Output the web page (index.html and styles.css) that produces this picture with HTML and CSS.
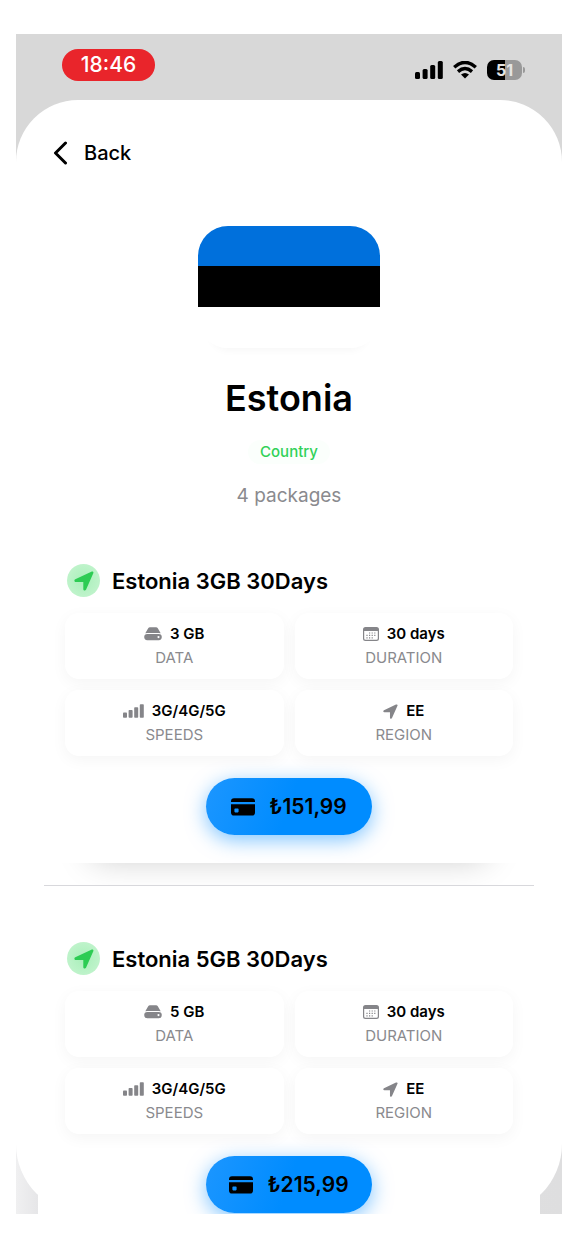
FILE: index.html
```html
<!DOCTYPE html>
<html lang="en">
<head>
<meta charset="utf-8">
<meta name="viewport" content="width=device-width, initial-scale=1">
<title>Estonia packages</title>
<link rel="stylesheet" href="styles.css">
</head>
<body>
<svg class="sprite" aria-hidden="true">
  <symbol id="arrow" viewBox="0 0 20 20"><path d="M19.3 2.3 12 18.7C11.4 20 9.3 19.7 9.3 18.2V11L1.8 10.9C.1 10.8-.1 9 1.3 8.3L17.3.7C18.7.1 19.9 1.1 19.3 2.3Z"/></symbol>
  <symbol id="drive" viewBox="0 0 18 14"><path d="M4.2 1.2Q4.8 .2 6 .2H12Q13.2 .2 13.8 1.2L16.7 6.3Q15.6 5.9 14.6 5.9H3.4Q2.4 5.9 1.3 6.3Z"/><path fill-rule="evenodd" d="M3.3 7H14.7A3.1 3.1 0 0 1 14.7 13.2H3.3A3.1 3.1 0 0 1 3.3 7ZM14.5 9A1.1 1.1 0 1 0 14.5 11.2 1.1 1.1 0 0 0 14.5 9Z"/></symbol>
  <symbol id="calendar" viewBox="0 0 16 14"><path fill-rule="evenodd" d="M2.5 0H13.5Q16 0 16 2.5V11.5Q16 14 13.5 14H2.5Q0 14 0 11.5V2.5Q0 0 2.5 0ZM1.2 4V11.6Q1.2 12.8 2.4 12.8H13.6Q14.8 12.8 14.8 11.6V4Z"/><path d="M6 5.4h1.2v1.2H6zM8.6 5.4h1.2v1.2H8.6zM11.2 5.4h1.2v1.2h-1.2zM3.4 7.8h1.2V9H3.4zM6 7.8h1.2V9H6zM8.6 7.8h1.2V9H8.6zM11.2 7.8h1.2V9h-1.2zM3.4 10.2h1.2v1.2H3.4zM6 10.2h1.2v1.2H6zM8.6 10.2h1.2v1.2H8.6z"/></symbol>
  <symbol id="bars" viewBox="0 0 21 14"><rect x="0" y="8.5" width="4" height="5.2" rx=".8"/><rect x="5.6" y="6" width="4" height="7.7" rx=".8"/><rect x="11.2" y="3.2" width="4" height="10.5" rx=".8"/><rect x="16.8" y=".3" width="4" height="13.4" rx=".8"/></symbol>
  <symbol id="card" viewBox="0 0 24 18"><path d="M0 4V3.2Q0 .3 3 .3H21Q24 .3 24 3.2V4Z"/><path fill-rule="evenodd" d="M0 6.2H24V14.5Q24 17.6 21 17.6H3Q0 17.6 0 14.5ZM4.2 10.4Q3.4 10.4 3.4 11.2V13.6Q3.4 14.4 4.2 14.4H6.8Q7.6 14.4 7.6 13.6V11.2Q7.6 10.4 6.8 10.4Z"/></symbol>
</svg>
<div class="screen">
  <header class="status">
    <span class="time">18:46</span>
    <div class="indicators">
      <svg class="signal" viewBox="0 0 28 18"><rect x="0" y="11" width="5" height="7" rx="1.5"/><rect x="7.6" y="8" width="5" height="10" rx="1.5"/><rect x="15.2" y="4" width="5" height="14" rx="1.5"/><rect x="22.8" y="0" width="5" height="18" rx="1.5"/></svg>
      <svg class="wifi" viewBox="0 0 24 18"><path d="M1.2 6.2Q12-3.4 22.8 6.2M5 10.6Q12 4.6 19 10.6" fill="none" stroke="currentColor" stroke-width="3.4"/><path d="M8 13.6Q12 10.2 16 13.6L12 17.6Z"/></svg>
      <span class="battery"><span class="level">51</span></span>
    </div>
  </header>
  <main class="sheet">
    <button class="back" type="button"><svg class="chevron" viewBox="0 0 14 24"><path d="M12 2 2 12 12 22"/></svg>Back</button>
    <section class="hero">
      <div class="flag" role="img" aria-label="Flag of Estonia"></div>
      <h1 class="country">Estonia</h1>
      <p class="kind">Country</p>
      <p class="count">4 packages</p>
    </section>
    <div class="packages">
      <article class="package">
        <div class="panel">
          <h2 class="name"><span class="badge"><svg class="badge-icon"><use href="#arrow"/></svg></span>Estonia 3GB 30Days</h2>
          <div class="facts">
            <div class="fact"><div class="value"><svg class="drive"><use href="#drive"/></svg>3 GB</div><div class="label">DATA</div></div>
            <div class="fact"><div class="value"><svg class="calendar"><use href="#calendar"/></svg>30 days</div><div class="label">DURATION</div></div>
            <div class="fact"><div class="value"><svg class="bars"><use href="#bars"/></svg>3G/4G/5G</div><div class="label">SPEEDS</div></div>
            <div class="fact"><div class="value"><svg class="arrow"><use href="#arrow"/></svg>EE</div><div class="label">REGION</div></div>
          </div>
          <button class="buy" type="button"><svg class="card"><use href="#card"/></svg>₺151,99</button>
        </div>
      </article>
      <article class="package">
        <div class="panel">
          <h2 class="name"><span class="badge"><svg class="badge-icon"><use href="#arrow"/></svg></span>Estonia 5GB 30Days</h2>
          <div class="facts">
            <div class="fact"><div class="value"><svg class="drive"><use href="#drive"/></svg>5 GB</div><div class="label">DATA</div></div>
            <div class="fact"><div class="value"><svg class="calendar"><use href="#calendar"/></svg>30 days</div><div class="label">DURATION</div></div>
            <div class="fact"><div class="value"><svg class="bars"><use href="#bars"/></svg>3G/4G/5G</div><div class="label">SPEEDS</div></div>
            <div class="fact"><div class="value"><svg class="arrow"><use href="#arrow"/></svg>EE</div><div class="label">REGION</div></div>
          </div>
          <button class="buy" type="button"><svg class="card"><use href="#card"/></svg>₺215,99</button>
        </div>
      </article>
    </div>
  </main>
</div>
</body>
</html>
```
FILE: styles.css
```css
* { box-sizing: border-box; }
body { margin: 0; padding: 34px 10px 24px 16px; background: #fff; color: #000; font-family: Inter, "Liberation Sans", sans-serif; }
h1, h2, p { margin: 0; }
button { border: 0; font: inherit; color: inherit; cursor: pointer; }
svg { display: block; flex: none; fill: currentColor; }
.sprite { position: absolute; width: 0; height: 0; }

.screen { overflow: hidden; background: linear-gradient(#d8d8d8 0 50%, transparent 50%), linear-gradient(90deg, #f0f0f1, #e6e6e8 22px, #dededf); }

.status { display: flex; justify-content: space-between; align-items: flex-start; height: 66px; padding: 15px 37px 0 46px; }
.time { width: 93px; border-radius: 16px; background: #e9252b; color: #fff; font-size: 21px; font-weight: 500; line-height: 32px; text-align: center; }
.indicators { display: flex; align-items: center; gap: 10px; padding-top: 11px; }
.signal { width: 28px; height: 18px; }
.wifi { width: 24px; height: 18px; }
.battery { display: flex; align-items: center; }
.battery::after { content: ""; width: 2px; height: 6px; margin-left: 1px; border-radius: 0 2px 2px 0; background: #999; }
.level { width: 35px; border-radius: 7px; background: linear-gradient(90deg, #000 51%, #999 51%); color: #e4e4e4; font-size: 16px; font-weight: 700; line-height: 20px; text-align: center; }

.sheet { padding: 36px 22px 0; border-radius: 62px 62px 70px 70px; background: #fff; }
.back { display: flex; align-items: center; gap: 16px; height: 34px; margin-left: 15px; padding: 0; background: none; font-size: 20px; font-weight: 500; }
.chevron { width: 15px; height: 24px; fill: none; stroke: #000; stroke-width: 3; stroke-linecap: round; stroke-linejoin: round; }

.hero { display: flex; flex-direction: column; align-items: center; padding-top: 56px; }
.flag { width: 182px; height: 122px; border-radius: 30px; background: linear-gradient(#0070dc 0 40px, #000 40px 81px, #fff 81px); box-shadow: 0 15px 10px -14px #0000000c; }
.country { margin-top: 26px; font-size: 36px; font-weight: 600; line-height: 48px; }
.kind { margin-top: 18px; padding: 0 12px; border-radius: 12px; background: #fbfffc; color: #30d158; font-size: 15px; font-weight: 500; line-height: 24px; }
.count { margin-top: 20px; color: #8a8a8e; font-size: 19px; line-height: 24px; }

.packages { background: #fff; }
.package { margin: 0 6px; overflow: hidden; }
.package:not(:last-child) { padding-bottom: 22px; border-bottom: 1px solid #d8d8dc; }
.panel { padding: 56px 21px 28px; background: #fff; box-shadow: 0 44px 32px -48px #00000038; }
.package:last-child .panel { padding-bottom: 1px; }
.name { display: flex; align-items: center; gap: 12px; padding-left: 2px; font-size: 22px; font-weight: 600; line-height: 32px; }
.badge { display: grid; place-items: center; width: 33px; height: 33px; border-radius: 50%; background: radial-gradient(#a9efba, #c8f5d2); color: #2dcc54; }
.badge-icon { width: 20px; height: 20px; }
.facts { display: grid; grid-template-columns: 1fr 1fr; gap: 11px; padding-top: 16px; }
.fact { height: 66px; padding-top: 9px; border-radius: 14px; background: #fff; box-shadow: 0 4px 16px #0000000b; text-align: center; }
.value { display: flex; justify-content: center; align-items: center; gap: 8px; font-size: 15px; font-weight: 600; line-height: 24px; }
.value svg { color: #858589; }
.label { color: #8a8a8e; font-size: 15px; line-height: 24px; }
.drive { width: 18px; height: 14px; }
.calendar { width: 16px; height: 14px; }
.bars { width: 21px; height: 14px; }
.arrow { width: 15px; height: 15px; }
.buy { display: flex; justify-content: center; align-items: center; gap: 14px; min-width: 166px; height: 57px; margin: 22px auto 0; padding: 0 20px; border-radius: 29px; background: linear-gradient(110deg, #1c96ff, #008cff 50%); box-shadow: 0 5px 20px #008cff80; font-size: 21px; font-weight: 600; }
.card { width: 24px; height: 18px; }
```
